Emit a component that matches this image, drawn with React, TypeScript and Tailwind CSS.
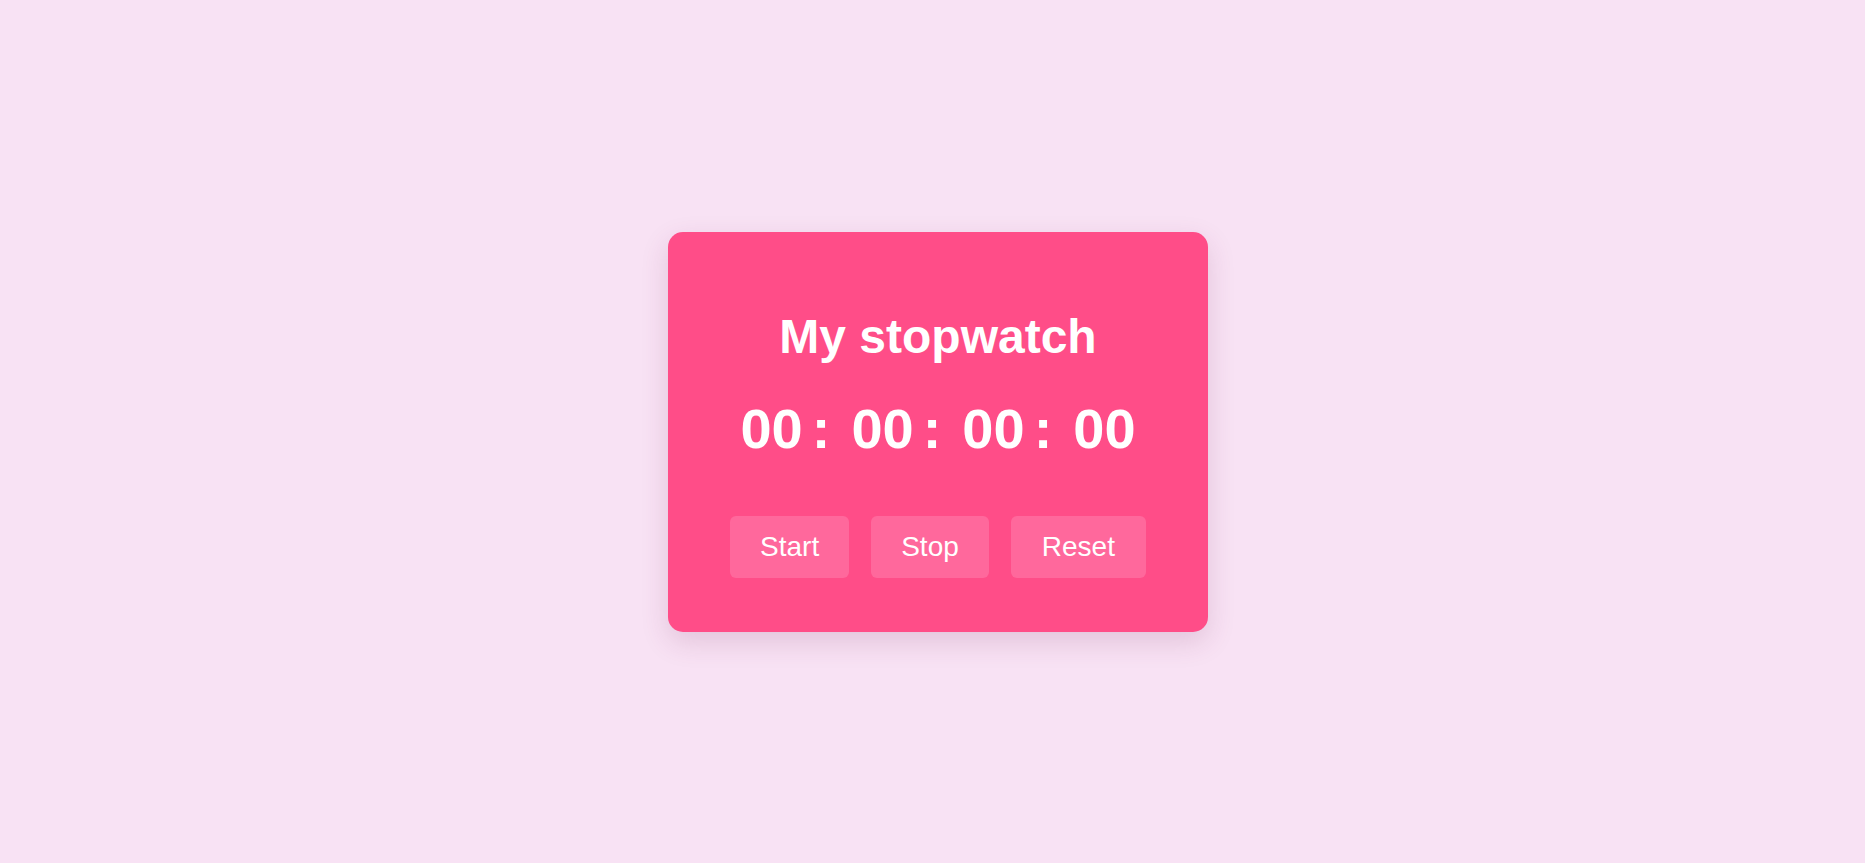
import { Fragment } from "react";

const App: React.FC = () => {
    const parts = ["00", "00", "00", "00"];

    return (
        <div className="flex min-h-screen items-center justify-center bg-[#f8e2f4] pl-[11px] font-['Liberation_Sans',Arial,sans-serif]">
            {/* Card */}
            <div className="flex w-[540px] flex-col items-center rounded-[15px] bg-[#ff4d88] pt-[81px] pb-[54px] text-white shadow-[0_10px_28px_rgba(120,40,90,0.16)]">
                <h1 className="text-[48px] leading-none font-bold">My stopwatch</h1>

                <div className="mt-[40px] flex text-[56px] leading-none font-bold">
                    {parts.map((p, i) => (
                        <Fragment key={i}>
                            <span>{p}</span>
                            {i < parts.length - 1 && <span className="ml-[9px] mr-[21px]">:</span>}
                        </Fragment>
                    ))}
                </div>

                {/* Buttons */}
                <div className="mt-[59px] flex gap-[22px]">
                    <button className="rounded-[6px] bg-[#ff689c] px-[30px] py-[15px] text-[28px] leading-[32px] text-white">
                        Start
                    </button>
                    <button className="rounded-[6px] bg-[#ff689c] px-[30px] py-[15px] text-[28px] leading-[32px] text-white">
                        Stop
                    </button>
                    <button className="rounded-[6px] bg-[#ff689c] px-[31px] py-[15px] text-[28px] leading-[32px] text-white">
                        Reset
                    </button>
                </div>
            </div>
        </div>
    );
};

export default App;
